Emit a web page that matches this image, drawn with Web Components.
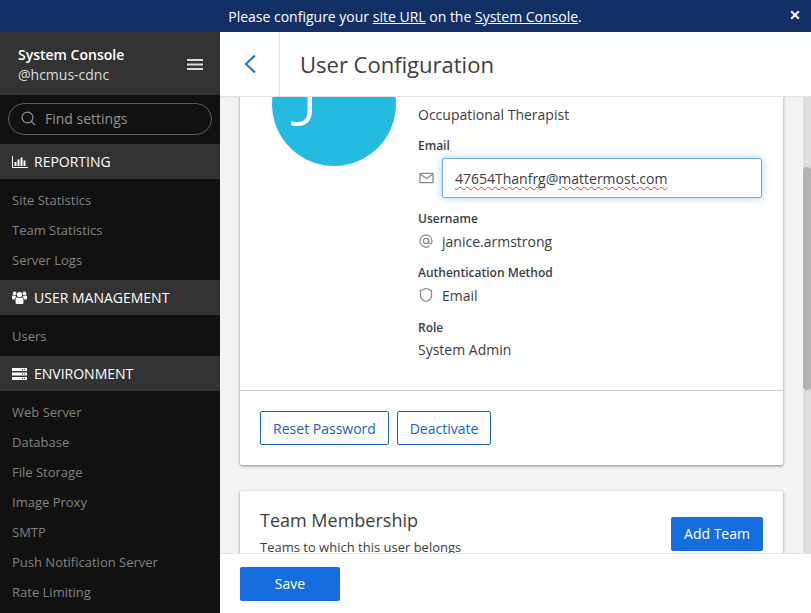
<!DOCTYPE html>
<html>
<head>
<meta charset="utf-8">
<style>
    html, body { margin: 0; height: 100%; overflow: hidden; }
    body { font-family: "Open Sans", sans-serif; color: #3d3c40; }
</style>
</head>
<body>
<admin-app>
    <admin-banner slot="banner">Please configure your <a>site URL</a> on the <a>System Console</a>.</admin-banner>
    <admin-sidebar slot="sidebar">
        <nav-section label="REPORTING" icon="chart">
            <nav-item>Site Statistics</nav-item>
            <nav-item>Team Statistics</nav-item>
            <nav-item>Server Logs</nav-item>
        </nav-section>
        <nav-section label="USER MANAGEMENT" icon="users">
            <nav-item>Users</nav-item>
        </nav-section>
        <nav-section label="ENVIRONMENT" icon="server">
            <nav-item>Web Server</nav-item>
            <nav-item>Database</nav-item>
            <nav-item>File Storage</nav-item>
            <nav-item>Image Proxy</nav-item>
            <nav-item>SMTP</nav-item>
            <nav-item>Push Notification Server</nav-item>
            <nav-item>Rate Limiting</nav-item>
        </nav-section>
    </admin-sidebar>
    <user-config slot="main"></user-config>
</admin-app>

<script>
    function define(name, html, extra) {
        const cls = class extends HTMLElement {
            constructor() {
                super();
                this.attachShadow({mode: 'open'}).innerHTML = html;
            }
            connectedCallback() {
                if (extra) extra(this);
            }
        };
        customElements.define(name, cls);
    }

    const icons = {
        chart: '<svg width="16" height="12" viewBox="0 0 16 12" fill="currentColor"><path d="M0 0h1v11h15v1H0z"/><rect x="2.500" y="6" width="2" height="4"/><rect x="5.500" y="3.500" width="2" height="6.500"/><rect x="8.500" y="1.500" width="2" height="8.500"/><rect x="11.500" y="4.500" width="2" height="5.500"/></svg>',
        users: '<svg width="15" height="13" viewBox="0 0 15 13" fill="currentColor"><circle cx="7.500" cy="3.600" r="2.600"/><circle cx="2.600" cy="2.400" r="1.900"/><circle cx="12.400" cy="2.400" r="1.900"/><path d="M3.600 8.200C3.600 6.900 4.600 6.400 5.600 6.600c1.200.6 2.600.6 3.800 0 1-.2 2 .3 2 1.600V12c0 .6-.4 1-1 1H4.600c-.6 0-1-.4-1-1z"/><path d="M0 5.400C0 4.600.6 4.300 1.200 4.400c.7.4 1.500.5 2.300.3.2.5.5 1 1 1.300-1 .4-1.700 1.200-1.700 2.400H.8C.3 8.400 0 8 0 7.600zM15 5.400c0-.8-.6-1.100-1.200-1-.7.4-1.500.5-2.300.3-.2.5-.5 1-1 1.300 1 .4 1.700 1.200 1.700 2.400h2c.5 0 .8-.4.8-.8z"/></svg>',
        server: '<svg width="15" height="12" viewBox="0 0 15 12" fill="currentColor" fill-rule="evenodd"><path d="M0 0h15v3H0zM10 1v1h1V1zM12 1v1h1V1z"/><path d="M0 4.500h15v3H0zM10 5.500v1h1v-1zM12 5.500v1h1v-1z"/><path d="M0 9h15v3H0zM10 10v1h1v-1zM12 10v1h1v-1z"/></svg>'
    };

    define('admin-app', `
        <style>
            :host { display: grid; grid-template-columns: 220px 1fr; grid-template-rows: 32px 1fr; height: 613px; width: 811px; overflow: hidden; }
            ::slotted([slot=banner]) { grid-column: 1 / 3; }
            ::slotted([slot=sidebar]), ::slotted([slot=main]) { min-height: 0; min-width: 0; }
        </style>
        <slot name="banner"></slot>
        <slot name="sidebar"></slot>
        <slot name="main"></slot>
    `);

    define('admin-banner', `
        <style>
            :host { display: flex; align-items: center; justify-content: center; position: relative; background: #122f66; color: #fff; font-size: 14px; padding-right: 1px; }
            ::slotted(a) { text-decoration: underline; }
            svg { position: absolute; right: 11px; top: 10px; }
        </style>
        <span><slot></slot></span>
        <svg width="10" height="10" viewBox="0 0 10 10"><path d="M1.200 1.200l7.600 7.600M8.800 1.200L1.200 8.800" stroke="#fff" stroke-width="2.200"/></svg>
    `);

    define('admin-sidebar', `
        <style>
            :host { display: flex; flex-direction: column; background: #111; overflow: hidden; }
            .head { display: flex; align-items: center; justify-content: space-between; height: 63px; flex: none; box-sizing: border-box; padding: 2px 17px 0 18px; background: #333; color: #fff; font-size: 14px; line-height: 20px; }
            .head b { display: block; font-weight: 600; }
            .head span { display: block; color: #ddd; }
            .find { display: flex; flex: none; padding: 8px 8px 9px; }
            .pill { flex: 1; display: flex; align-items: center; gap: 9px; padding: 0 0 1px 12px; height: 29px; border: 1px solid #5c5c5c; border-radius: 16px; color: #919191; font-size: 14px; }
        </style>
        <div class="head">
            <div><b>System Console</b><span>@hcmus-cdnc</span></div>
            <svg width="16" height="11" viewBox="0 0 16 11" fill="#ddd"><rect width="16" height="2"/><rect y="4.500" width="16" height="2"/><rect y="9" width="16" height="2"/></svg>
        </div>
        <div class="find">
            <div class="pill">
                <svg width="15" height="15" viewBox="0 0 15 15" fill="none" stroke="#919191" stroke-width="1.200"><circle cx="6.500" cy="6.500" r="5.400"/><path d="M10.400 10.400L14 14"/></svg>
                <span>Find settings</span>
            </div>
        </div>
        <slot></slot>
    `);

    define('nav-section', `
        <style>
            :host { display: block; flex: none; }
            .title { display: flex; align-items: center; height: 35px; padding-left: 12px; background: #333; color: #fff; font-size: 14px; }
            .icon { width: 22px; display: flex; color: #fff; }
            .items { padding: 6px 0 5px; }
        </style>
        <div class="title"><span class="icon"></span><span class="label"></span></div>
        <div class="items"><slot></slot></div>
    `, el => {
        el.shadowRoot.querySelector('.label').textContent = el.getAttribute('label');
        el.shadowRoot.querySelector('.icon').innerHTML = icons[el.getAttribute('icon')];
    });

    define('nav-item', `
        <style>
            :host { display: flex; align-items: center; height: 30px; padding-left: 12px; color: #828282; font-size: 13px; }
        </style>
        <slot></slot>
    `);

    define('outline-button', `
        <style>
            :host { display: inline-flex; align-items: center; justify-content: center; height: 34px; box-sizing: border-box; border: 1px solid #1a5fbf; border-radius: 2px; color: #1a5fbf; font-size: 14px; }
        </style>
        <slot></slot>
    `);

    define('primary-button', `
        <style>
            :host { display: inline-flex; align-items: center; justify-content: center; height: 34px; box-sizing: border-box; padding-bottom: 2px; background: #166de0; border-radius: 2px; color: #fff; font-size: 14px; font-weight: 500; }
        </style>
        <slot></slot>
    `);

    define('info-row', `
        <style>
            :host { display: block; }
            .label { font-size: 12px; font-weight: 600; line-height: 16px; margin-bottom: var(--gap, 2px); }
            .value { display: flex; align-items: center; min-height: 24px; font-size: 14px; }
            ::slotted(svg) { width: 16px; height: 16px; margin-right: 8px; flex: none; }
        </style>
        <div class="label"></div>
        <div class="value"><slot name="icon"></slot><slot></slot></div>
    `, el => {
        el.shadowRoot.querySelector('.label').textContent = el.getAttribute('label');
    });

    define('user-config', `
        <style>
            :host { display: flex; flex-direction: column; height: 581px; background: #f3f3f3; }
            .top { display: flex; align-items: center; flex: none; height: 64px; background: #fff; border-bottom: 1px solid #e2e2e2; }
            .back { display: flex; align-items: center; justify-content: center; width: 59px; height: 64px; border-right: 1px solid #e8e8e8; }
            h1 { margin: 0 0 0 20px; font-size: 22px; font-weight: 400; }
            .body { flex: 1; min-height: 0; display: flex; }
            .scroll { flex: 1; min-width: 0; overflow-y: scroll; padding: 20px; }
            .bar { width: 8px; flex: none; background: #dedede; }
            .thumb { height: 223px; margin-top: 70px; background: #b3b3b3; border-radius: 4px; }
            .card { background: #fff; border-radius: 2px; box-shadow: 0 1px 3px rgba(0,0,0,.45); margin-bottom: 26px; }
            .profile { display: flex; padding: 40px 21px 29px 32px; border-bottom: 1px solid #ccc; gap: 22px; }
            .avatar { width: 124px; height: 124px; flex: none; border-radius: 50%; background: #25bbe0; color: #fff; font-size: 86px; font-weight: 300; line-height: 70px; text-indent: 27px; overflow: hidden; }
            .details { flex: 1; display: flex; flex-direction: column; }
            .who { font-size: 14px; line-height: 20px; margin-top: 63px; }
            .rows { display: flex; flex-direction: column; }
            .mail-label { font-size: 12px; font-weight: 600; line-height: 16px; margin-top: 13px; margin-bottom: 4px; }
            .mail { display: flex; align-items: center; }
            .mail svg { flex: none; margin: 0 8px 0 1px; }
            .input { flex: 1; height: 38px; border: 1px solid #66afe9; border-radius: 2px; box-shadow: 0 0 8px rgba(102,175,233,.55); padding-left: 12px; display: flex; align-items: center; font-size: 14px; }
            .input span { text-decoration: underline wavy #e8323c 1px; text-underline-offset: 2px; text-decoration-skip-ink: none; white-space: pre; }
            .u { margin-top: 13px; }
            .a { margin-top: 12px; }
            .r { margin-top: 13px; --gap: 1px; }
            .actions { display: flex; gap: 8px; padding: 20px; }
            .actions outline-button:nth-child(1) { width: 129px; }
            .actions outline-button:nth-child(2) { width: 94px; }
            .team-head { display: flex; justify-content: space-between; align-items: flex-start; padding: 26px 20px 0; }
            .team-head h2 { margin: -9px 0 0; font-size: 18px; font-weight: 400; line-height: 24px; }
            .team-head p { margin: 6px 0 0; font-size: 13px; line-height: 18px; }
            .team-head primary-button { width: 92px; }
            .team-body { height: 160px; }
            .foot { flex: none; display: flex; align-items: center; padding: 1px 0 0 20px; background: #fff; border-top: 1px solid #e2e2e2; box-sizing: border-box; height: 60px; }
            .foot primary-button { width: 100px; }
        </style>
        <div class="top">
            <div class="back">
                <svg width="14" height="20" viewBox="0 0 14 20" fill="none" stroke="#166de0" stroke-width="2"><path d="M12 1.500L3 10l9 8.500"/></svg>
            </div>
            <h1>User Configuration</h1>
        </div>
        <div class="body">
            <div class="scroll">
                <div class="card">
                    <div class="profile">
                        <div class="avatar">J</div>
                        <div class="details">
                            <div class="who">Occupational Therapist</div>
                            <div class="mail-label">Email</div>
                            <div class="mail">
                                <svg width="15" height="12" viewBox="0 0 16 12" fill="none" stroke="#8a8a8a" stroke-width="1.400"><rect x="1" y="1" width="14" height="10" rx="1"/><path d="M1.500 2l6.500 4.500L14.500 2"/></svg>
                                <div class="input"><div><span>47654Thanfrg</span>@<span>mattermost.com</span></div></div>
                            </div>
                            <div class="rows">
                                <info-row class="u" label="Username">
                                    <svg slot="icon" viewBox="0 0 16 16" fill="none" stroke="#8a8a8a" stroke-width="1.200"><circle cx="8" cy="8" r="2.600"/><path d="M10.600 5.400v3.600c0 1.200.8 1.800 1.600 1.800s1.800-.8 1.800-2.800a6 6 0 1 0-2.600 5"/></svg>
                                    janice.armstrong
                                </info-row>
                                <info-row class="a" label="Authentication Method">
                                    <svg slot="icon" viewBox="0 0 16 16" fill="none" stroke="#8a8a8a" stroke-width="1.300"><path d="M8 1.500l5.500 2v5c0 3-2.500 5-5.500 6-3-1-5.500-3-5.500-6v-5z"/></svg>
                                    Email
                                </info-row>
                                <info-row class="r" label="Role">System Admin</info-row>
                            </div>
                        </div>
                    </div>
                    <div class="actions">
                        <outline-button>Reset Password</outline-button>
                        <outline-button>Deactivate</outline-button>
                    </div>
                </div>
                <div class="card">
                    <div class="team-head">
                        <div>
                            <h2>Team Membership</h2>
                            <p>Teams to which this user belongs</p>
                        </div>
                        <primary-button>Add Team</primary-button>
                    </div>
                    <div class="team-body"></div>
                </div>
            </div>
            <div class="bar"><div class="thumb"></div></div>
        </div>
        <div class="foot"><primary-button>Save</primary-button></div>
    `, el => {
        const scroll = el.shadowRoot.querySelector('.scroll');
        scroll.scrollTop = 115;
    });
</script>
</body>
</html>
